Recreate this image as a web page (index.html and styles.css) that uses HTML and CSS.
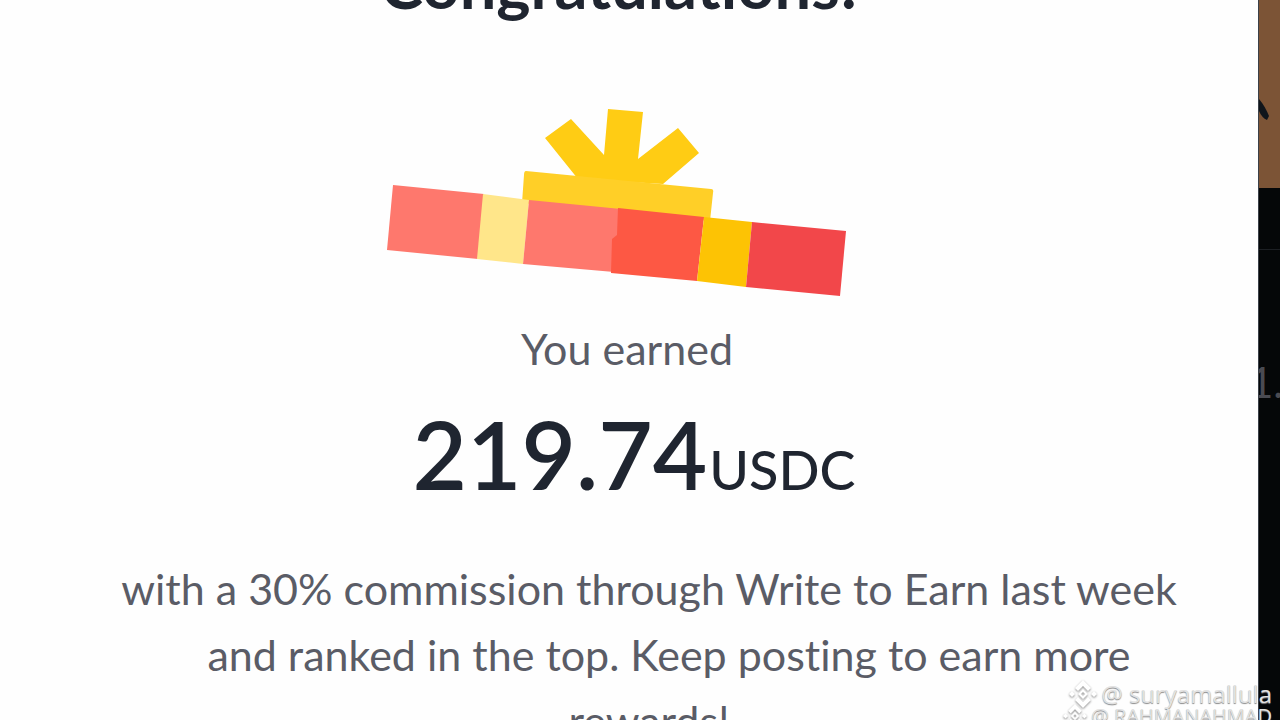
FILE: index.html
```html
<!DOCTYPE html>
<html lang="en">
<head>
    <meta charset="UTF-8">
    <meta name="viewport" content="width=device-width, initial-scale=1.0">
    <title>Write to Earn</title>
    <link rel="stylesheet" href="styles.css">
</head>
<body>

<main class="card">
    <h1>Congratulations!</h1>

    <svg class="gift" viewBox="383 100 472 204" aria-hidden="true">
        <!-- bow -->
        <path fill="#ffcc14" d="M545 138l26-19 33 36 4-46 35 3-5 47 40-31 21 25-36 31-85-5z"/>
        <path fill="#ffcf27" d="M526 171l185 18q3 0 2 4l-3 28-188-18 2-28q0-4 2-4z"/>
        <!-- lid -->
        <path fill="#fe786d" d="M393 185l91 9-6 65-91-9z"/>
        <path fill="#ffe68a" d="M483 194l46 6-6 64-46-5z"/>
        <path fill="#fe786d" d="M529 200l92 9-7 63-91-8z"/>
        <path fill="#fd5844" d="M618 208l86 9-7 64-86-8 1-34 5-4z"/>
        <path fill="#fdc304" d="M704 217l48 5-6 65-49-6z"/>
        <path fill="#f2474a" d="M752 222l94 9-6 65-94-9z"/>
    </svg>

    <p class="label">You earned</p>
    <p class="amount">219.74<span class="currency">USDC</span></p>
    <p class="message">
        <span class="line">with a 30% commission through Write to Earn last week</span>
        <span class="line indent">and ranked in the top. Keep posting to earn more</span>
        <span class="line">rewards!</span>
    </p>
</main>

<aside class="backdrop">
    <div class="photo">
        <svg viewBox="0 0 22 188" aria-hidden="true">
            <path fill="#10151b" d="M0 99q6 7 10 17l-2 4q-5-2-8-9z"/>
        </svg>
    </div>
    <div class="row"></div>
    <p class="price">1.0</p>
</aside>

<svg class="defs" aria-hidden="true">
    <symbol id="logo" viewBox="0 0 28 28">
        <path d="M14 0l8 8-3 3-5-5-5 5-3-3zM3 11l3 3-3 3-3-3zM25 11l3 3-3 3-3-3zM14 9l5 5-5 5-5-5zm0 3l-2 2 2 2 2-2zM6 20l3-3 5 5 5-5 3 3-8 8z"/>
    </symbol>
</svg>
<div class="watermark">
    <p class="author"><svg class="logo"><use href="#logo"/></svg>@ suryamallula</p>
    <p class="author small"><svg class="logo"><use href="#logo"/></svg>@ RAHMANAHMAD</p>
</div>

</body>
</html>
```

FILE: styles.css
```css
* {
    box-sizing: border-box;
}
body {
    display: flex;
    height: 100vh;
    margin: 0;
    overflow: hidden;
    position: relative;
    background-color: #050708;
    font-family: Lato, "Liberation Sans", sans-serif;
    font-variant-ligatures: none;
}
h1, p {
    margin: 0;
}

/* Reward card */
.card {
    flex: 1;
    display: flex;
    flex-direction: column;
    align-items: center;
    margin-top: -52px;
    padding-right: 20px;
    background-color: #fefefe;
    color: #1f2530;
    white-space: nowrap;
}
h1 {
    font-size: 65px;
    line-height: 72px;
    font-weight: 700;
}
.gift {
    flex: none;
    width: 472px;
    height: 204px;
    margin-top: 80px;
}
.label {
    margin-top: 12px;
    padding-left: 16px;
    font-size: 43px;
    line-height: 66px;
    color: #5a5c66;
}
.amount {
    margin-top: 12px;
    padding-left: 30px;
    font-size: 94px;
    line-height: 120px;
    font-weight: 600;
}
.currency {
    margin-left: 2px;
    font-size: 54px;
    font-weight: 500;
}
.message {
    margin-top: 26px;
    padding-left: 60px;
    font-size: 43px;
    line-height: 66px;
    color: #5a5c66;
    text-align: center;
}
.line {
    display: block;
}
.indent {
    padding-left: 40px;
}

/* Page behind the card */
.backdrop {
    flex: none;
    width: 22px;
    overflow: hidden;
    border-left: 1px solid #3a4048;
}
.photo {
    height: 188px;
    background-color: #7c5436;
}
.photo svg {
    display: block;
    width: 22px;
    height: 188px;
}
.row {
    height: 62px;
    border-bottom: 1px solid #1c1f23;
}
.price {
    margin-top: 108px;
    margin-left: -10px;
    font-size: 42px;
    line-height: 48px;
    color: #4a4b52;
}

/* Watermark */
.defs {
    position: absolute;
    width: 0;
    height: 0;
}
.watermark {
    position: absolute;
    right: 8px;
    top: 682px;
    color: #e2e2e2;
    font-family: "Open Sans", "Noto Sans", sans-serif;
    text-shadow: 0 1px 1px #888;
    white-space: nowrap;
}
.author {
    display: flex;
    align-items: center;
    justify-content: flex-end;
    gap: 4px;
    font-size: 24px;
    line-height: 24px;
}
.small {
    font-size: 20px;
    line-height: 20px;
}
.logo {
    width: 28px;
    height: 28px;
    margin: -2px 0;
    fill: #fff;
    fill-rule: evenodd;
    filter: drop-shadow(0 1px 1px #888);
}
.small .logo {
    width: 24px;
    height: 24px;
}
```
